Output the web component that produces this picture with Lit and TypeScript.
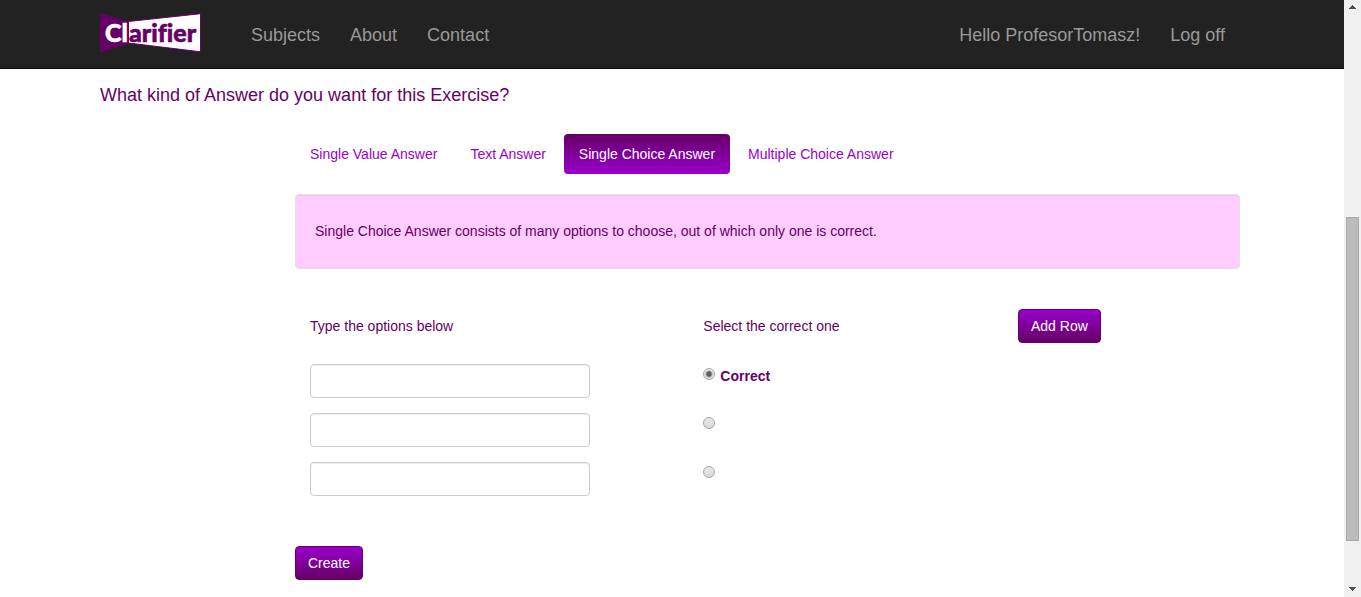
import { LitElement, html, css } from "lit";
import { customElement, state } from "lit/decorators.js";

@customElement("clarifier-logo")
export class ClarifierLogo extends LitElement {
  static styles = css`
    :host { display: block; }
    svg { display: block; }
    .word {
      font: 900 25px Lato, "Liberation Sans", sans-serif;
      font-variant-ligatures: none;
      stroke-width: 0.6px;
    }
    .dark { fill: #606; }
    .light { fill: #fff; }
    .word.dark { stroke: #606; }
    .word.light { stroke: #fff; }
  `;

  render() {
    return html`
      <svg width="101" height="40" viewBox="0 0 101 40" role="img" aria-label="Clarifier">
        <polygon class="dark" points="0,0 28,8.5 28,31 0,39.5"></polygon>
        <polygon class="light" stroke="#606" points="28.5,8.5 100.5,.7 100.5,38.8 28.5,30"></polygon>
        <text class="word light" x="5" y="28.5">Cl</text>
        <text class="word dark" x="29" y="28.5">arifier</text>
      </svg>
    `;
  }
}

@customElement("page-scrollbar")
export class PageScrollbar extends LitElement {
  static styles = css`
    :host {
      box-sizing: border-box;
      display: flex;
      flex-direction: column;
      justify-content: space-between;
      align-items: center;
      width: 17px;
      padding: 5px 0 6px;
      background: #f0f0f0;
    }
    .track {
      flex: 1;
      display: grid;
      grid-template-rows: 208fr 324fr 46fr;
      width: 13px;
    }
    .thumb {
      grid-row: 2;
      background: #bcbcbc;
      border: 1px solid #a8a8a8;
    }
    svg { display: block; fill: #505050; }
  `;

  render() {
    return html`
      <svg width="7" height="4" viewBox="0 0 7 4" shape-rendering="crispEdges"><path d="M3 0h1v1h1v1h1v1h1v1H0V3h1V2h1V1h1z"></path></svg>
      <div class="track"><div class="thumb"></div></div>
      <svg width="7" height="4" viewBox="0 0 7 4" shape-rendering="crispEdges"><path d="M0 0h7v1H6v1H5v1H4v1H3V3H2V2H1V1H0z"></path></svg>
    `;
  }
}

interface Tab {
  name: string;
  about: string;
}

const TABS: Tab[] = [
  { name: "Single Value Answer", about: "Single Value Answer consists of exactly one value." },
  { name: "Text Answer", about: "Text Answer consists of free text." },
  {
    name: "Single Choice Answer",
    about: "Single Choice Answer consists of many options to choose, out of which only one is correct.",
  },
  {
    name: "Multiple Choice Answer",
    about: "Multiple Choice Answer consists of many options to choose, out of which any number may be correct.",
  },
];

@customElement("app-root")
export class AppRoot extends LitElement {
  @state() private tab = 2;
  @state() private options: string[] = ["", "", ""];
  @state() private correct = 0;

  static styles = css`
    :host {
      display: flex;
      min-height: 100vh;
      background: #fff;
      color: #606;
      font: 14px/20px "Liberation Sans", Arial, sans-serif;
    }
    * { box-sizing: border-box; }
    a { text-decoration: none; }
    .page { flex: 1; min-width: 0; }
    .navbar { background: #222; border-bottom: 1px solid #080808; }
    .container {
      max-width: 1170px;
      margin: 0 auto;
      padding: 0 17px 0 13px;
    }
    .bar {
      display: flex;
      align-items: center;
      height: 68px;
      font-size: 18px;
    }
    .brand { margin: 0 35px 2px 0; }
    .links { display: flex; }
    .links a { padding: 25px 15px 23px; color: #999; }
    .account { margin-left: auto; }
    .question {
      margin: 16px 0 29px;
      font-size: 18px;
      font-weight: 400;
      line-height: 20px;
    }
    .answer { margin-left: 195px; }
    .tabs { display: flex; gap: 3px; }
    .tabs a {
      padding: 10px 15px;
      border-radius: 4px;
      color: #90c;
    }
    .tabs .active {
      color: #fff;
      background: linear-gradient(#606, #90c);
    }
    .well {
      margin: 20px 0 40px;
      padding: 26px 19px;
      border: 1px solid #e3e3e3;
      border-radius: 4px;
      background: #fcf;
      box-shadow: inset 0 1px 1px rgba(0, 0, 0, 0.05);
    }
    .well p { margin: 0; line-height: 21px; }
    .row {
      display: grid;
      grid-template-columns: 5fr 4fr 3fr;
      margin-bottom: 15px;
      padding-right: 1px;
    }
    .row > * { margin: 0 15px; }
    .head { align-items: center; margin-bottom: 21px; }
    .text {
      width: 280px;
      height: 34px;
      padding: 6px 12px;
      border: 1px solid #ccc;
      border-radius: 4px;
      color: #555;
      font: inherit;
      box-shadow: inset 0 1px 1px rgba(0, 0, 0, 0.075);
    }
    .choice {
      display: flex;
      align-items: flex-start;
      gap: 5px;
      padding-top: 2px;
      font-weight: 700;
    }
    .radio {
      appearance: none;
      flex: none;
      width: 12px;
      height: 12px;
      margin: 2px 0 0;
      border: 1px solid #a6a6a6;
      border-radius: 50%;
      background: linear-gradient(#e8e8e8, #dadada);
    }
    .radio:checked {
      background: radial-gradient(circle, #5c5c5c 2px, #5c5c5c00 4px), linear-gradient(#eee, #dedede);
    }
    .button {
      justify-self: start;
      height: 34px;
      padding: 6px 12px;
      border: 1px solid #606;
      border-radius: 4px;
      color: #fff;
      background: linear-gradient(#90c, #606);
      font: inherit;
      cursor: pointer;
    }
    .create { margin: 35px 0 17px; }
  `;

  private pick(event: Event, index: number) {
    event.preventDefault();
    this.tab = index;
  }

  private addRow() {
    this.options = [...this.options, ""];
  }

  private edit(index: number, event: Event) {
    const value = (event.target as HTMLInputElement).value;
    this.options = this.options.map((old, i) => (i === index ? value : old));
  }

  render() {
    return html`
      <div class="page">
        <header class="navbar">
          <div class="container bar">
            <a class="brand" href="#"><clarifier-logo></clarifier-logo></a>
            <nav class="links">
              <a href="#subjects">Subjects</a>
              <a href="#about">About</a>
              <a href="#contact">Contact</a>
            </nav>
            <nav class="links account">
              <a href="#manage">Hello ProfesorTomasz!</a>
              <a href="#logoff">Log off</a>
            </nav>
          </div>
        </header>
        <main class="container">
          <h1 class="question">What kind of Answer do you want for this Exercise?</h1>
          <form class="answer" @submit=${(e: Event) => e.preventDefault()}>
            <nav class="tabs">
              ${TABS.map(
                (tab, i) => html`<a
                  href="#"
                  class=${i === this.tab ? "active" : ""}
                  @click=${(e: Event) => this.pick(e, i)}
                  >${tab.name}</a
                >`
              )}
            </nav>
            <div class="well"><p>${TABS[this.tab].about}</p></div>
            <div class="row head">
              <span>Type the options below</span>
              <span>Select the correct one</span>
              <button class="button" type="button" @click=${this.addRow}>Add Row</button>
            </div>
            ${this.options.map(
              (value, i) => html`
                <div class="row">
                  <input
                    class="text"
                    type="text"
                    aria-label="Option ${i + 1}"
                    .value=${value}
                    @input=${(e: Event) => this.edit(i, e)}
                  />
                  <label class="choice">
                    <input
                      class="radio"
                      type="radio"
                      name="correct"
                      aria-label="Option ${i + 1} is correct"
                      .checked=${i === this.correct}
                      @change=${() => (this.correct = i)}
                    />
                    ${i === this.correct ? html`<span>Correct</span>` : ""}
                  </label>
                </div>
              `
            )}
            <button class="button create" type="submit">Create</button>
          </form>
        </main>
      </div>
      <page-scrollbar aria-hidden="true"></page-scrollbar>
    `;
  }
}
